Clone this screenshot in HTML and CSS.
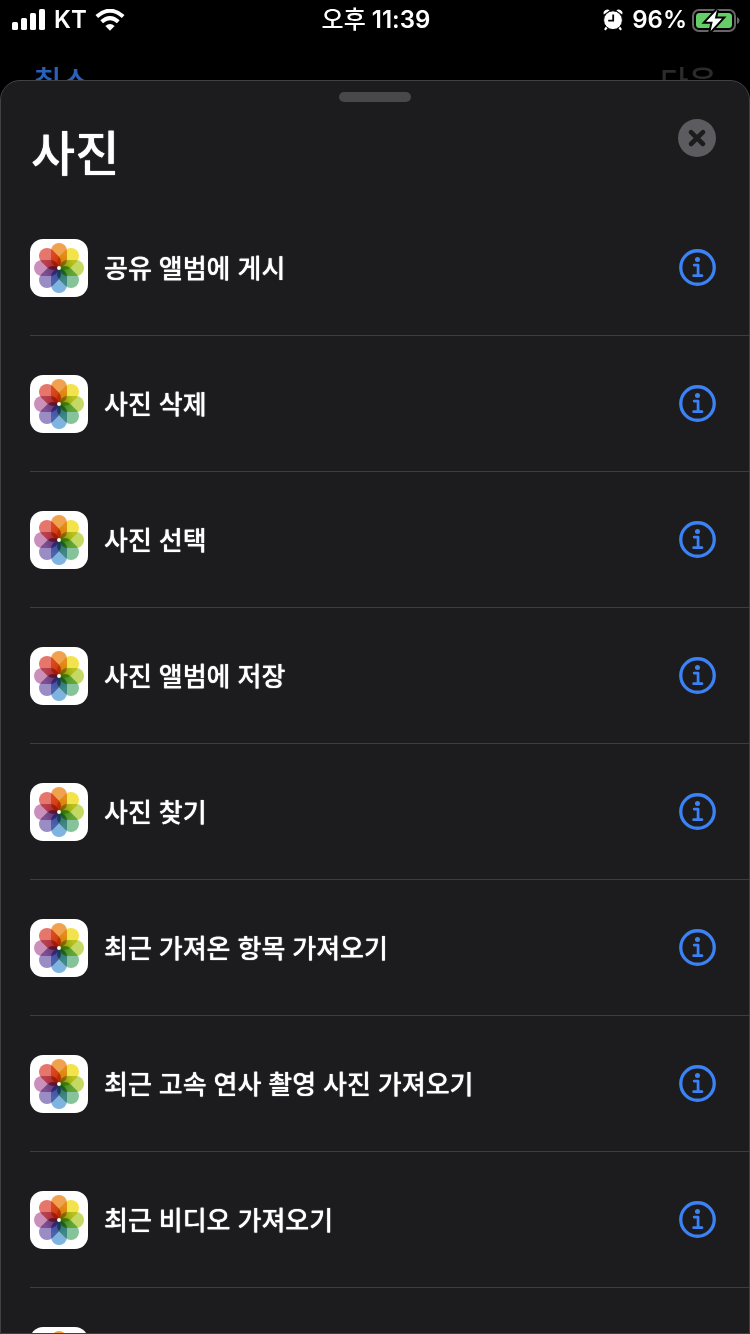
FILE: index.html
```html
<!DOCTYPE html>
<html lang="ko">
<head>
<meta charset="utf-8">
<meta name="viewport" content="width=device-width, initial-scale=1">
<title>사진</title>
<link rel="stylesheet" href="styles.css">
</head>
<body>
<svg class="defs" aria-hidden="true">
  <linearGradient id="p1" x2="0" y2="1"><stop offset=".45" stop-color="#f0a24e"/><stop offset="1" stop-color="#e8961c"/></linearGradient>
  <linearGradient id="p2" x2="0" y2="1"><stop offset=".45" stop-color="#f2e24c"/><stop offset="1" stop-color="#dccb1c"/></linearGradient>
  <linearGradient id="p3" x2="0" y2="1"><stop offset=".45" stop-color="#c3d963"/><stop offset="1" stop-color="#8fc032"/></linearGradient>
  <linearGradient id="p4" x2="0" y2="1"><stop offset=".45" stop-color="#86c29a"/><stop offset="1" stop-color="#5fb57a"/></linearGradient>
  <linearGradient id="p5" x2="0" y2="1"><stop offset=".45" stop-color="#80b4e0"/><stop offset="1" stop-color="#6a9cd8"/></linearGradient>
  <linearGradient id="p6" x2="0" y2="1"><stop offset=".45" stop-color="#9a8cc4"/><stop offset="1" stop-color="#8478bc"/></linearGradient>
  <linearGradient id="p7" x2="0" y2="1"><stop offset=".45" stop-color="#cb8fbb"/><stop offset="1" stop-color="#c070a8"/></linearGradient>
  <linearGradient id="p8" x2="0" y2="1"><stop offset=".45" stop-color="#e6756a"/><stop offset="1" stop-color="#e05040"/></linearGradient>
  <symbol id="photos" viewBox="0 0 58 58">
    <rect width="58" height="58" rx="13" fill="#fff"/>
    <g class="petals">
      <rect x="21" y="4" width="16" height="24.4" rx="8" fill="url(#p1)"/>
      <rect x="21" y="4" width="16" height="24.4" rx="8" fill="url(#p2)" transform="rotate(45 29 29)"/>
      <rect x="21" y="4" width="16" height="24.4" rx="8" fill="url(#p3)" transform="rotate(90 29 29)"/>
      <rect x="21" y="4" width="16" height="24.4" rx="8" fill="url(#p4)" transform="rotate(135 29 29)"/>
      <rect x="21" y="4" width="16" height="24.4" rx="8" fill="url(#p5)" transform="rotate(180 29 29)"/>
      <rect x="21" y="4" width="16" height="24.4" rx="8" fill="url(#p6)" transform="rotate(225 29 29)"/>
      <rect x="21" y="4" width="16" height="24.4" rx="8" fill="url(#p7)" transform="rotate(270 29 29)"/>
      <rect x="21" y="4" width="16" height="24.4" rx="8" fill="url(#p8)" transform="rotate(315 29 29)"/>
    </g>
    <circle cx="29" cy="29" r="1.9" fill="#fff"/>
  </symbol>
  <symbol id="info" viewBox="0 0 38 38">
    <circle cx="19" cy="19" r="17.2" fill="none" stroke="#3b82f6" stroke-width="3.4"/>
    <circle cx="19" cy="10.8" r="2.6" fill="#3b82f6"/>
    <path d="M15.6 16.5H19.6V27M15 27.4H23.6" fill="none" stroke="#3b82f6" stroke-width="2.8" stroke-linecap="round" stroke-linejoin="round"/>
  </symbol>
</svg>

<header class="status">
  <div class="status-left">
    <svg width="34" height="22" viewBox="0 0 34 22" fill="#fff" aria-hidden="true">
      <rect x="0" y="13" width="6" height="8" rx="1.6"/><rect x="9" y="9" width="6" height="12" rx="1.6"/><rect x="18" y="4" width="6" height="17" rx="1.6"/><rect x="27" y="0" width="6" height="21" rx="1.6"/>
    </svg>
    <span>KT</span>
    <svg width="30" height="22" viewBox="0 0 30 22" aria-hidden="true">
      <path d="M1.8 7.6Q15-4.2 28.2 7.6M6.7 12.8Q15 5.4 23.3 12.8" fill="none" stroke="#fff" stroke-width="4"/>
      <path d="M10.4 17.1Q15 13.1 19.6 17.1L15 21.8Z" fill="#fff"/>
    </svg>
  </div>
  <time class="clock"><span class="period">오후</span> 11:39</time>
  <div class="status-right">
    <svg class="alarm" width="20" height="22" viewBox="0 0 20 22" aria-hidden="true">
      <path d="M.8 5.4Q-.2 2.6 2.2 1.2 4.8-.2 6.6 1.4ZM19.2 5.4Q20.2 2.6 17.8 1.2 15.2-.2 13.4 1.4Z" fill="#fff"/>
      <path d="M4 18L2.4 20.2M16 18L17.6 20.2" stroke="#fff" stroke-width="2.2" stroke-linecap="round"/>
      <circle cx="10" cy="11.2" r="9.4" fill="#fff" stroke="#000" stroke-width="1"/>
      <path d="M10.2 5.6V11.6H5.2" fill="none" stroke="#000" stroke-width="1.8"/>
    </svg>
    <span>96%</span>
    <svg width="48" height="26" viewBox="0 0 48 26" aria-hidden="true">
      <rect x="1" y="3" width="42" height="21" rx="6" fill="none" stroke="#666" stroke-width="2"/>
      <rect x="4" y="6" width="36" height="15" rx="3.5" fill="#65cf67"/>
      <path d="M45 10Q47.5 11 47.5 13.5 47.5 16 45 17Z" fill="#666"/>
      <path d="M25 3L14 14.8H20.7L18.6 24 30 11.6H22.8Z" fill="#fff" stroke="#000" stroke-width="4" paint-order="stroke"/>
    </svg>
  </div>
</header>

<nav class="nav">
  <button class="cancel" type="button">취소</button>
  <button class="next" type="button" disabled>다음</button>
</nav>

<main class="sheet">
  <div class="grabber"></div>
  <div class="sheet-head">
    <h1>사진</h1>
    <button class="close" type="button" aria-label="닫기">
      <svg width="38" height="38" viewBox="0 0 38 38" aria-hidden="true"><path d="M13 13.2L25 25M25 13.2L13 25" stroke="#1c1c1e" stroke-width="4.6" stroke-linecap="round"/></svg>
    </button>
  </div>
  <ul class="actions">
    <li><svg class="app"><use href="#photos"/></svg><span class="name">공유 앨범에 게시</span><button class="info" type="button" aria-label="정보"><svg><use href="#info"/></svg></button></li>
    <li><svg class="app"><use href="#photos"/></svg><span class="name">사진 삭제</span><button class="info" type="button" aria-label="정보"><svg><use href="#info"/></svg></button></li>
    <li><svg class="app"><use href="#photos"/></svg><span class="name">사진 선택</span><button class="info" type="button" aria-label="정보"><svg><use href="#info"/></svg></button></li>
    <li><svg class="app"><use href="#photos"/></svg><span class="name">사진 앨범에 저장</span><button class="info" type="button" aria-label="정보"><svg><use href="#info"/></svg></button></li>
    <li><svg class="app"><use href="#photos"/></svg><span class="name">사진 찾기</span><button class="info" type="button" aria-label="정보"><svg><use href="#info"/></svg></button></li>
    <li><svg class="app"><use href="#photos"/></svg><span class="name">최근 가져온 항목 가져오기</span><button class="info" type="button" aria-label="정보"><svg><use href="#info"/></svg></button></li>
    <li><svg class="app"><use href="#photos"/></svg><span class="name">최근 고속 연사 촬영 사진 가져오기</span><button class="info" type="button" aria-label="정보"><svg><use href="#info"/></svg></button></li>
    <li><svg class="app"><use href="#photos"/></svg><span class="name">최근 비디오 가져오기</span><button class="info" type="button" aria-label="정보"><svg><use href="#info"/></svg></button></li>
    <li><svg class="app"><use href="#photos"/></svg></li>
  </ul>
</main>
</body>
</html>
```

FILE: styles.css
```css
* { box-sizing: border-box; }

body {
  margin: 0;
  height: 100vh;
  display: flex;
  flex-direction: column;
  overflow: hidden;
  background: #000;
  color: #fff;
  font-family: Inter, "Noto Sans CJK KR", sans-serif;
}

button {
  padding: 0;
  border: 0;
  background: none;
  font: inherit;
}

svg { display: block; flex: none; }

.defs { position: absolute; width: 0; height: 0; }

.petals rect { mix-blend-mode: multiply; }

.status {
  flex: none;
  display: grid;
  grid-template-columns: 1fr auto 1fr;
  align-items: center;
  height: 40px;
  padding: 0 10px 0 12px;
  font-size: 24px;
  line-height: 40px;
  font-weight: 600;
}

.status-left,
.status-right {
  display: flex;
  align-items: center;
}

.status-left { gap: 8px; }

.status-right {
  justify-content: flex-end;
  gap: 5px;
}

.alarm { margin-right: 4px; }

.period { font-weight: 500; }

.nav {
  flex: none;
  display: flex;
  justify-content: space-between;
  height: 40px;
  padding: 22px 33px 0;
  font-size: 31px;
  line-height: 40px;
  font-weight: 500;
}

.cancel,
.next { height: 40px; }

.cancel { color: #2960b8; }

.next { color: #2b2b2d; }

.nav,
h1,
.name { text-shadow: 0 0 1px currentColor; }

.sheet {
  position: relative;
  flex: 1;
  min-height: 0;
  display: flex;
  flex-direction: column;
  overflow: hidden;
  border: 1px solid #414143;
  border-radius: 20px 20px 0 0;
  background: #1c1c1e;
}

.grabber {
  flex: none;
  align-self: center;
  width: 72px;
  height: 10px;
  margin-top: 11px;
  border-radius: 5px;
  background: #48484a;
}

.sheet-head {
  flex: none;
  display: flex;
  justify-content: space-between;
  align-items: flex-start;
  height: 98px;
  padding: 17px 33px 0 30px;
}

h1 {
  margin: 0;
  font-size: 48px;
  line-height: 70px;
  font-weight: 500;
}

.close {
  width: 38px;
  height: 38px;
  border-radius: 50%;
  background: #5b5b60;
}

.actions {
  flex: 1;
  min-height: 0;
  overflow: hidden;
  margin: 0;
  padding: 0 0 0 29px;
  list-style: none;
}

.actions li {
  display: flex;
  align-items: center;
  gap: 16px;
  height: 136px;
  padding-right: 33px;
  border-bottom: 1px solid #3d3d40;
  font-size: 26px;
  line-height: 40px;
  font-weight: 500;
}

.name { padding-top: 2px; }

.app {
  width: 58px;
  height: 58px;
}

.info { margin-left: auto; }

.info svg {
  width: 37px;
  height: 37px;
}
```
